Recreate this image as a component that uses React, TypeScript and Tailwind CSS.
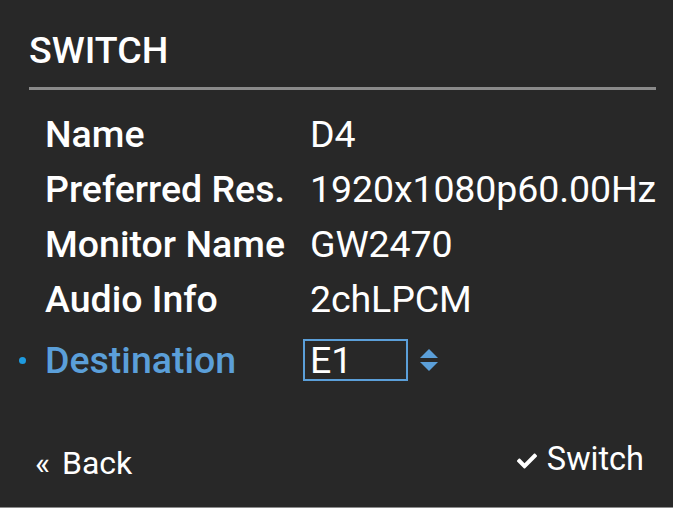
import { useState } from 'react';
import { FaCheck } from 'react-icons/fa';

const rows = [
  { label: 'Name', value: 'D4' },
  { label: 'Preferred Res.', value: '1920x1080p60.00Hz' },
  { label: 'Monitor Name', value: 'GW2470' },
  { label: 'Audio Info', value: '2chLPCM' },
];

export default function App() {
  const [dest] = useState('E1');

  return (
    <div className="w-[673px] h-[508px] bg-[#282828] text-white border-b border-[#8c8c8c] flex flex-col font-['Roboto',sans-serif] overflow-hidden">
      {/* Header */}
      <div className="pl-[29px] pr-[17px] pt-[24px]">
        <h1 className="text-[37.5px] leading-[52px] font-medium">SWITCH</h1>
        <div className="h-[3px] bg-[#8a8a8a] mt-[11px] w-[627px]"></div>
      </div>

      {/* Info rows */}
      <div className="flex flex-col pt-[17px]">
        {rows.map((r) => (
          <div key={r.label} className="flex h-[55px] items-center text-[37.5px] leading-[55px]">
            <span className="w-[310px] pl-[45px] font-medium shrink-0">{r.label}</span>
            <span className="whitespace-nowrap tracking-[-0.1px]">{r.value}</span>
          </div>
        ))}

        {/* Destination */}
        <div className="flex h-[66px] items-center text-[37.5px] leading-[55px] relative">
          <span className="absolute left-[19px] top-[30px] w-[7px] h-[7px] rounded-full bg-[#1e9be0]"></span>
          <span className="w-[310px] pl-[45px] font-medium text-[#5b9fd9] shrink-0">Destination</span>
          <div className="-ml-[7px] w-[105px] h-[42px] border-2 border-[#5b9fd9] flex items-center pl-[5px] leading-[42px]">
            {dest}
          </div>
          <div className="ml-[12px] flex flex-col gap-[4px]">
            <svg width="18" height="9" viewBox="0 0 18 9">
              <polygon points="9,0 18,9 0,9" fill="#5b9fd9" />
            </svg>
            <svg width="18" height="9" viewBox="0 0 18 9">
              <polygon points="0,0 18,0 9,9" fill="#5b9fd9" />
            </svg>
          </div>
        </div>
      </div>

      {/* Footer */}
      <div className="mt-auto flex items-start justify-between pl-[35px] pr-[29px] pb-[22px]">
        <button className="flex items-center gap-[12px] text-[32px] leading-[44px]">
          <span>«</span>
          <span>Back</span>
        </button>
        <button className="flex items-center gap-[10px] text-[32.5px] leading-[44px] -mt-[4px]">
          <FaCheck className="w-[20px] h-[20px] mt-[3px]" />
          <span>Switch</span>
        </button>
      </div>
    </div>
  );
}
